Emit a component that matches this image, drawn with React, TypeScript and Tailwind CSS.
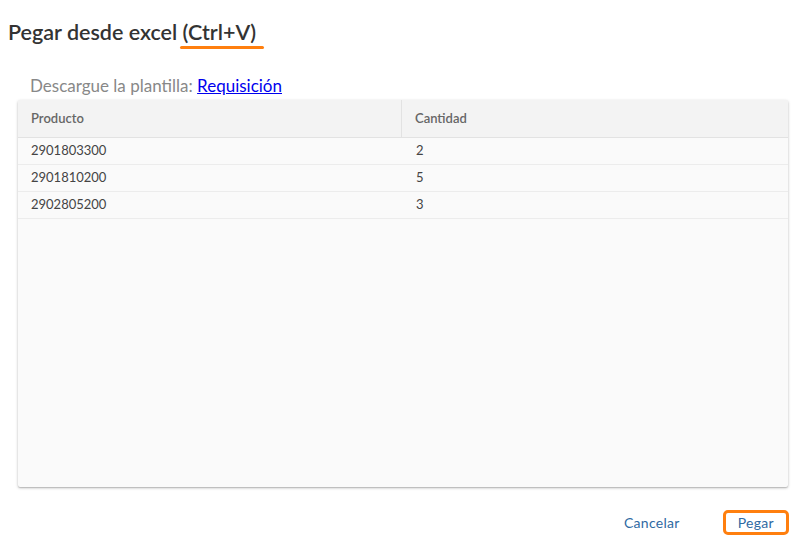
import React from 'react';

const rows = [
  { producto: '2901803300', cantidad: '2' },
  { producto: '2901810200', cantidad: '5' },
  { producto: '2902805200', cantidad: '3' },
];

export default function App() {
  return (
    <div className="w-[801px] h-[541px] bg-white flex flex-col font-['Lato','Open_Sans',sans-serif] text-[#333]">
      <div className="pl-2 pt-[18px] h-[48px]">
        <h2 className="text-[21.5px] font-semibold leading-[28px]">
          Pegar desde excel{' '}
          <span className="relative inline-block">
            (Ctrl+V)
            <span className="absolute left-[-3px] right-[-8px] top-[28px] h-[3px] rounded-full bg-[#ff7f0e]" />
          </span>
        </h2>
      </div>
      <div className="pl-[30px] pt-[27px] text-[17px] leading-[22px] text-[#888]">
        Descargue la plantilla:{' '}
        <a href="#" className="text-[#0000ee] underline">Requisición</a>
      </div>
      <div className="ml-[18px] mr-[13px] mt-[3px] h-[387px] bg-[#fafafa] rounded-[2px] shadow-[0_1px_3px_rgba(0,0,0,0.25),0_1px_1px_rgba(0,0,0,0.12)] overflow-hidden">
        <div className="grid grid-cols-[384px_1fr] h-[38px] bg-[#f3f3f3] border-b border-[#e2e2e2] text-[13px] font-semibold text-[#666]">
          <div className="flex items-center pl-[13px] border-r border-[#e2e2e2]">Producto</div>
          <div className="flex items-center pl-[13px]">Cantidad</div>
        </div>
        {rows.map((r) => (
          <div key={r.producto} className="grid grid-cols-[384px_1fr] h-[27px] border-b border-[#ececec] text-[13px] text-[#444]">
            <div className="flex items-center pl-[13px]">{r.producto}</div>
            <div className="flex items-center pl-[14px]">{r.cantidad}</div>
          </div>
        ))}
      </div>
      <div className="flex justify-end items-center gap-[43px] pr-[12px] pt-[23px] text-[14px] tracking-[0.3px] text-[#2f6aa3]">
        <button className="leading-[20px]">Cancelar</button>
        <button className="h-[25px] px-[12px] border-[3px] border-[#ff7f0e] rounded-[5px] leading-[18px]">Pegar</button>
      </div>
    </div>
  );
}
